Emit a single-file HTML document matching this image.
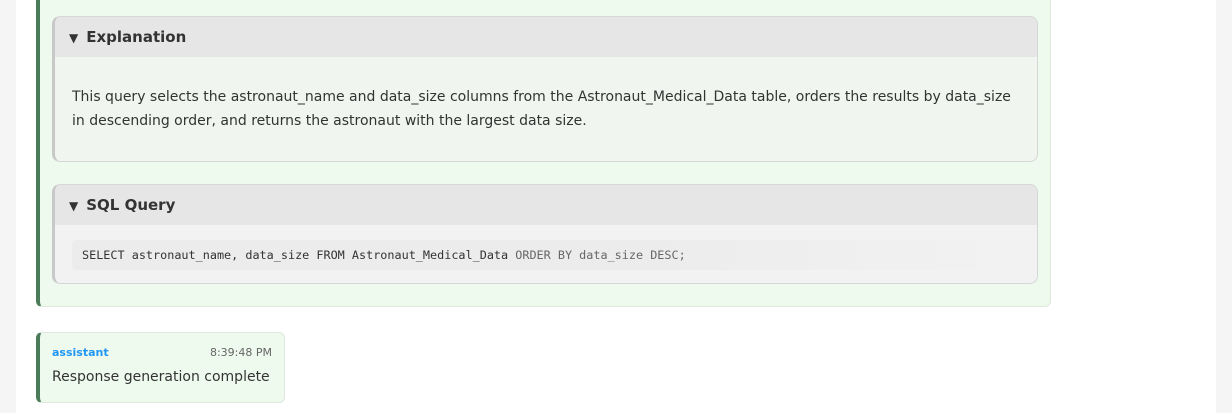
<!DOCTYPE html>
<html><head><style>
html,body{margin:0;padding:0;width:1232px;height:413px;overflow:hidden;background:#f5f5f5;font-family:"DejaVu Sans","Liberation Sans",sans-serif;}
.main{position:absolute;left:16px;top:0;width:1200px;height:413px;background:#fff;}
.msg{position:absolute;left:36px;background:#eefaee;border:1px solid #dfe8df;border-left:4px solid #4a7c59;border-radius:6px;box-sizing:border-box;}
.panel{position:absolute;left:52px;width:986px;border:1px solid #d6d6d6;border-left:3px solid #c8c8c8;border-radius:8px;box-sizing:border-box;overflow:hidden;background:#f0f5f0;}
.hd{height:40px;background:#e6e6e6;font-weight:bold;font-size:15px;color:#333;line-height:40px;padding-left:14px;}
.hd span{font-size:12px;margin-right:8px;}
.txt{font-size:14px;color:#333;line-height:24px;}
.code{position:absolute;left:17px;top:15px;width:950px;height:30px;background:linear-gradient(90deg,#ececec,#ececec 60%,#f2f2f2);border-radius:4px;font-family:"DejaVu Sans Mono","Liberation Mono",monospace;font-size:11.8px;line-height:30px;color:#333;padding-left:10px;box-sizing:border-box;white-space:pre;}
</style></head><body>
<div class="main"></div>
<div class="msg" style="top:-10px;width:1015px;height:317px;"></div>
<div class="panel" style="top:16px;height:146px;">
<div class="hd"><span>▼</span>Explanation</div>
<div class="txt" style="padding:28px 0 0 17px;">This query selects the astronaut_name and data_size columns from the Astronaut_Medical_Data table, orders the results by data_size<br>in descending order, and returns the astronaut with the largest data size.</div>
</div>
<div class="panel" style="top:184px;height:100px;background:#f3f2f2;">
<div class="hd"><span>▼</span>SQL Query</div>
<div style="position:relative;"><div class="code">SELECT astronaut_name, data_size FROM Astronaut_Medical_Data <span style="color:#666">ORDER BY data_size DESC;</span></div></div>
</div>
<div class="msg" style="top:332px;width:249px;height:71px;">
<div style="position:absolute;left:12px;top:13px;font-size:11px;font-weight:bold;color:#2196f3;">assistant</div>
<div style="position:absolute;right:12px;top:13px;font-size:11px;color:#666;">8:39:48 PM</div>
<div style="position:absolute;left:12px;top:36px;font-size:14px;color:#333;white-space:nowrap;">Response generation complete</div>
</div>
</body></html>
